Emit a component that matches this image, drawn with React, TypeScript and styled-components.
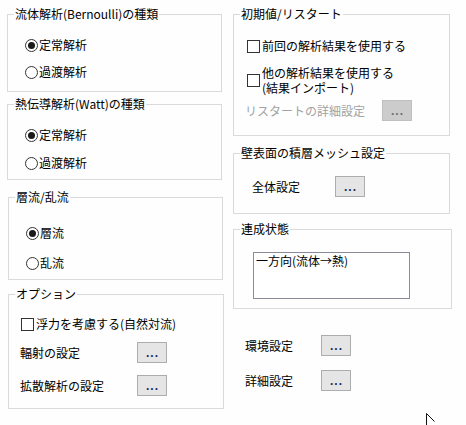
import React from "react";
import styled, { createGlobalStyle } from "styled-components";

const BG = "#fdfefd";

const Global = createGlobalStyle`
  html, body { margin: 0; padding: 0; background: ${BG}; }
  body {
    font-family: "Noto Sans CJK JP", "Noto Sans", sans-serif;
    font-size: 12px;
    color: #000;
    width: 466px;
    height: 425px;
    overflow: hidden;
  }
`;

const Page = styled.div`
  position: relative;
  width: 466px;
  height: 425px;
  display: flex;
  align-items: flex-start;
  padding: 14px 0 0 7px;
  box-sizing: border-box;
  gap: 10px;
`;

const Column = styled.div<{ $w: number }>`
  display: flex;
  flex-direction: column;
  width: ${(p) => p.$w}px;
`;

const Group = styled.div<{ $h: number; $mt?: number; $w?: number; $ml?: number }>`
  box-sizing: border-box;
  border: 1px solid #dadada;
  height: ${(p) => p.$h}px;
  width: ${(p) => (p.$w ? `${p.$w}px` : "100%")};
  margin-top: ${(p) => p.$mt ?? 0}px;
  margin-left: ${(p) => p.$ml ?? 0}px;
  display: flex;
  flex-direction: column;
`;

const Title = styled.div`
  align-self: flex-start;
  margin: -8px 0 0 6px;
  padding: 0 1px;
  background: ${BG};
  line-height: 14px;
  height: 14px;
  white-space: nowrap;
`;

const Row = styled.div<{ $mt: number; $ml: number }>`
  display: flex;
  align-items: center;
  margin-top: ${(p) => p.$mt}px;
  margin-left: ${(p) => p.$ml}px;
  line-height: 16px;
  min-height: 16px;
  white-space: nowrap;
`;

const RadioCircle = styled.span<{ $on?: boolean }>`
  box-sizing: border-box;
  width: 13px;
  height: 13px;
  border: 1px solid #333;
  border-radius: 50%;
  background: #fff;
  margin-right: 1px;
  display: flex;
  align-items: center;
  justify-content: center;
  flex: none;
  &::after {
    content: "";
    display: ${(p) => (p.$on ? "block" : "none")};
    width: 7px;
    height: 7px;
    border-radius: 50%;
    background: #1a1a1a;
  }
`;

const CheckBox = styled.span`
  box-sizing: border-box;
  width: 13px;
  height: 13px;
  border: 1px solid #333;
  background: #fff;
  margin-right: 2px;
  flex: none;
`;

const Label = styled.span<{ $w?: number; $disabled?: boolean }>`
  display: inline-block;
  width: ${(p) => (p.$w ? `${p.$w}px` : "auto")};
  color: ${(p) => (p.$disabled ? "#a2a2a2" : "#000")};
  line-height: 16px;
`;

const Multi = styled.span`
  display: block;
  white-space: pre-line;
  line-height: 15px;
`;

const DotButton = styled.button<{ $disabled?: boolean }>`
  box-sizing: border-box;
  width: 30px;
  height: 21px;
  padding: 0 0 0 1px;
  border: 1px solid ${(p) => (p.$disabled ? "#bfbfbf" : "#adadad")};
  background: ${(p) => (p.$disabled ? "#cccccc" : "#e5e5e5")};
  color: ${(p) => (p.$disabled ? "#6d6d7a" : "#1c2c62")};
  font-family: "Liberation Sans", sans-serif;
  font-size: 12px;
  line-height: 12px;
  font-weight: bold;
  letter-spacing: 1px;
  display: flex;
  align-items: center;
  justify-content: center;
  flex: none;
`;

const ListBox = styled.div`
  box-sizing: border-box;
  width: 157px;
  height: 47px;
  margin: 16px 0 0 19px;
  border: 1px solid #8a8a99;
  background: #fff;
  padding: 0 0 0 2px;
  line-height: 16px;
`;

const Cursor = styled.svg`
  position: absolute;
  left: 425px;
  top: 412px;
`;

const Radio = ({ on, children, mt, ml }: { on?: boolean; children: React.ReactNode; mt: number; ml: number }) => (
  <Row $mt={mt} $ml={ml}>
    <RadioCircle $on={on} />
    <Label>{children}</Label>
  </Row>
);

export default function App() {
  return (
    <>
      <Global />
      <Page>
        <Column $w={216}>
          <Group $h={78} $w={215}>
            <Title>流体解析(Bernoulli)の種類</Title>
            <Radio on mt={16} ml={17}>定常解析</Radio>
            <Radio mt={11} ml={17}>過渡解析</Radio>
          </Group>
          <Group $h={76} $w={215} $mt={12}>
            <Title>熱伝導解析(Watt)の種類</Title>
            <Radio on mt={16} ml={17}>定常解析</Radio>
            <Radio mt={12} ml={17}>過渡解析</Radio>
          </Group>
          <Group $h={83} $w={215} $mt={17} $ml={1}>
            <Title>層流/乱流</Title>
            <Radio on mt={21} ml={17}>層流</Radio>
            <Radio mt={14} ml={17}>乱流</Radio>
          </Group>
          <Group $h={115} $w={216} $mt={14} $ml={1}>
            <Title>オプション</Title>
            <Row $mt={15} $ml={12}>
              <CheckBox />
              <Label>浮力を考慮する(自然対流)</Label>
            </Row>
            <Row $mt={10} $ml={11}>
              <Label $w={117}>輻射の設定</Label>
              <DotButton>...</DotButton>
            </Row>
            <Row $mt={12} $ml={11}>
              <Label $w={117}>拡散解析の設定</Label>
              <DotButton>...</DotButton>
            </Row>
          </Group>
        </Column>
        <Column $w={220}>
          <Group $h={122} $w={217}>
            <Title>初期値/リスタート</Title>
            <Row $mt={17} $ml={13}>
              <CheckBox />
              <Label>前回の解析結果を使用する</Label>
            </Row>
            <Row $mt={11} $ml={13}>
              <CheckBox />
              <Multi>{"他の解析結果を使用する\n(結果インポート)"}</Multi>
            </Row>
            <Row $mt={5} $ml={11}>
              <Label $w={137} $disabled>リスタートの詳細設定</Label>
              <DotButton $disabled>...</DotButton>
            </Row>
          </Group>
          <Group $h={61} $w={217} $mt={17}>
            <Title>壁表面の積層メッシュ設定</Title>
            <Row $mt={16} $ml={18}>
              <Label $w={83}>全体設定</Label>
              <DotButton>...</DotButton>
            </Row>
          </Group>
          <Group $h={80} $w={219} $mt={15}>
            <Title>連成状態</Title>
            <ListBox>一方向(流体→熱)</ListBox>
          </Group>
          <Row $mt={26} $ml={12}>
            <Label $w={76}>環境設定</Label>
            <DotButton>...</DotButton>
          </Row>
          <Row $mt={14} $ml={12}>
            <Label $w={76}>詳細設定</Label>
            <DotButton>...</DotButton>
          </Row>
        </Column>
        <Cursor width="14" height="14" viewBox="0 0 14 14">
          <path d="M1.5 1.5 L1.5 14 M1.5 1.5 L9.5 9.5" stroke="#111" strokeWidth="1" fill="none" />
        </Cursor>
      </Page>
    </>
  );
}
